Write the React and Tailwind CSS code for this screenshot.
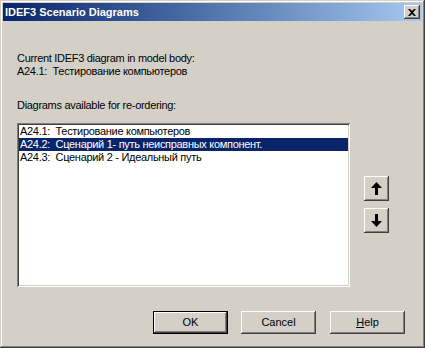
import React from 'react';

const raised =
  'shadow-[inset_-1px_-1px_#404040,inset_1px_1px_#ffffff,inset_-2px_-2px_#808080,inset_2px_2px_#d4d0c8]';

const UpArrow = () => (
  <svg width="11" height="13" viewBox="0 0 11 13">
    <path d="M5.5 0 L11 6 L7 6 L7 13 L4 13 L4 6 L0 6 Z" fill="#000" />
  </svg>
);

const DownArrow = () => (
  <svg width="11" height="13" viewBox="0 0 11 13">
    <path d="M4 0 L7 0 L7 7 L11 7 L5.5 13 L0 7 L4 7 Z" fill="#000" />
  </svg>
);

const rows = [
  { code: 'A24.1:', name: 'Тестирование компьютеров' },
  { code: 'A24.2:', name: 'Сценарий 1- путь неисправных компонент.', selected: true },
  { code: 'A24.3:', name: 'Сценарий 2 - Идеальный путь' },
];

export default function App() {
  return (
    <div
      className="w-[425px] h-[348px] bg-[#d4d0c8] p-[3px] text-[11px] leading-[13px] text-black shadow-[inset_-1px_-1px_#404040,inset_1px_1px_#d4d0c8,inset_-2px_-2px_#808080,inset_2px_2px_#ffffff]"
      style={{ fontFamily: '"Liberation Sans", Arial, sans-serif' }}
    >
      {/* title bar */}
      <div className="h-[18px] flex items-center justify-between pl-[2px] pr-[2px] bg-gradient-to-r from-[#0a246a] to-[#a6caf0]">
        <span className="text-white font-bold text-[11px]">IDEF3 Scenario Diagrams</span>
        <div className={`w-[16px] h-[14px] bg-[#d4d0c8] flex items-center justify-center ${raised}`}>
          <svg width="8" height="7" viewBox="0 0 8 7">
            <path d="M0 0 L2 0 L4 2 L6 0 L8 0 L5 3.5 L8 7 L6 7 L4 5 L2 7 L0 7 L3 3.5 Z" fill="#000" />
          </svg>
        </div>
      </div>

      <div className="pl-[14px] pt-[31px] tracking-[-0.3px]">
        <div>Current IDEF3 diagram in model body:</div>
        <div className="whitespace-pre">A24.1:  Тестирование компьютеров</div>
        <div className="mt-[21px]">Diagrams available for re-ordering:</div>

        <div className="flex mt-[11px]">
          <div className="w-[333px] h-[164px] bg-white p-[2px] shadow-[inset_1px_1px_#808080,inset_-1px_-1px_#ffffff,inset_2px_2px_#404040,inset_-2px_-2px_#d4d0c8]">
            {rows.map((r) => (
              <div
                key={r.code}
                className={`h-[13px] pl-[1px] whitespace-pre ${r.selected ? 'bg-[#0a246a] text-white' : ''}`}
              >
                {r.code}  {r.name}
              </div>
            ))}
          </div>
          <div className="ml-[14px] pt-[53px] flex flex-col gap-[7px]">
            <div className={`w-[25px] h-[25px] bg-[#d4d0c8] flex items-center justify-center ${raised}`}>
              <UpArrow />
            </div>
            <div className={`w-[25px] h-[25px] bg-[#d4d0c8] flex items-center justify-center ${raised}`}>
              <DownArrow />
            </div>
          </div>
        </div>

        <div className="flex justify-end pr-[17px] mt-[24px] gap-[13px] tracking-normal">
          <div className="w-[75px] h-[23px] flex items-center justify-center border border-black bg-[#d4d0c8] shadow-[inset_-1px_-1px_#404040,inset_1px_1px_#ffffff,inset_-2px_-2px_#808080]">
            OK
          </div>
          <div className={`w-[75px] h-[23px] flex items-center justify-center bg-[#d4d0c8] ${raised}`}>
            Cancel
          </div>
          <div className={`w-[75px] h-[23px] ml-[1px] flex items-center justify-center bg-[#d4d0c8] ${raised}`}>
            <span><span className="underline">H</span>elp</span>
          </div>
        </div>
      </div>
    </div>
  );
}
